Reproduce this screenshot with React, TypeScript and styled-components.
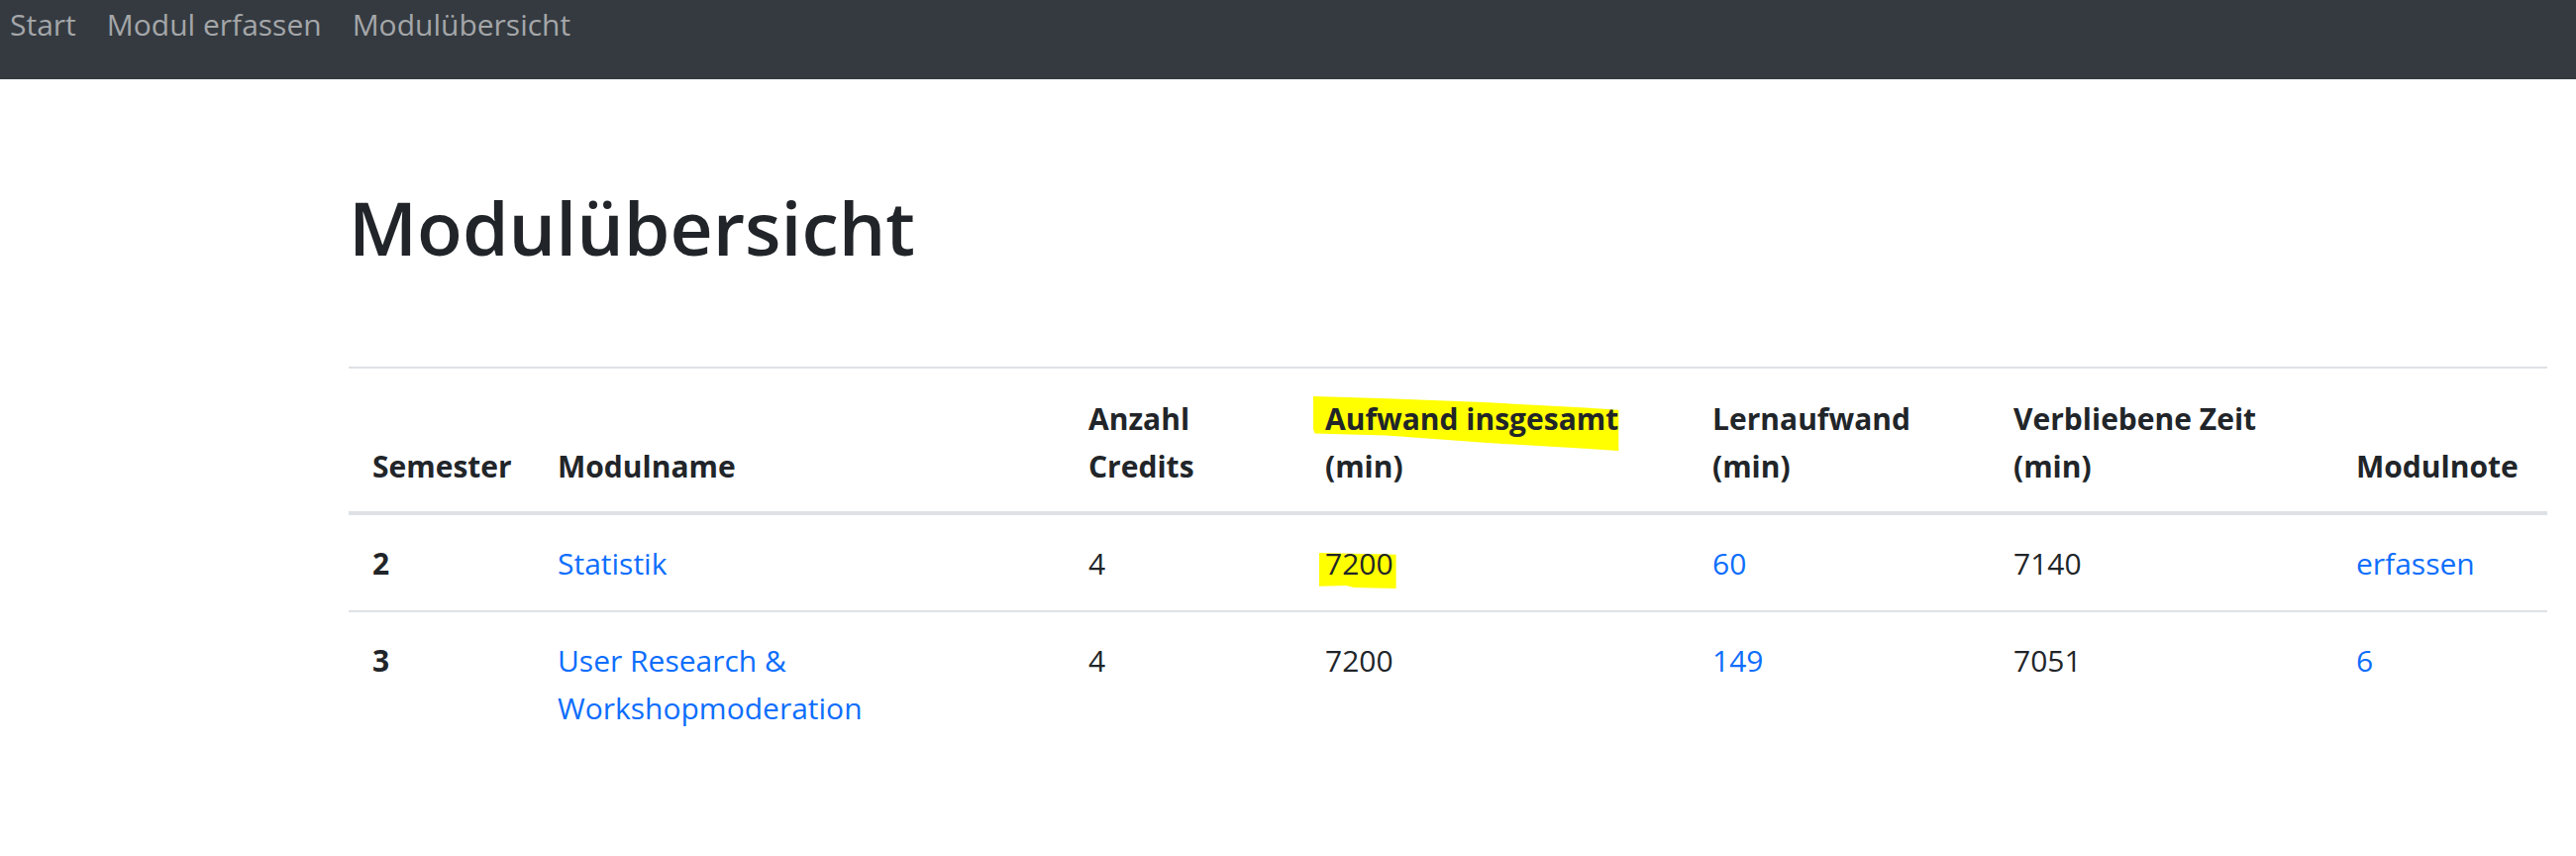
import React from "react";
import styled, { createGlobalStyle } from "styled-components";

const GlobalStyle = createGlobalStyle`
  html, body {
    margin: 0;
    padding: 0;
    background: #ffffff;
  }
  body {
    font-family: "Open Sans", "Noto Sans", "Liberation Sans", sans-serif;
    font-size: 30px;
    line-height: 48px;
    color: #212529;
  }
`;

const Navbar = styled.nav`
  height: 80px;
  background: #343a40;
  display: flex;
  align-items: flex-start;
  gap: 31px;
  padding-left: 10px;
`;

const NavLink = styled.a`
  color: #a4a6a9;
  font-size: 30px;
  line-height: 48px;
  padding-top: 1px;
  text-decoration: none;
`;

const Main = styled.main`
  margin-left: 352px;
  width: 2220px;
`;

const Title = styled.h1`
  margin: 101px 0 93px;
  font-size: 75px;
  line-height: 96px;
  font-weight: 600;
  color: #212529;
`;

const Table = styled.table`
  width: 2220px;
  table-layout: fixed;
  border-collapse: collapse;
`;

const Col = styled.col<{ $w: number }>`
  width: ${(p) => p.$w}px;
`;

const Th = styled.th`
  padding: 27px 24px 21px;
  text-align: left;
  vertical-align: bottom;
  font-weight: 700;
  line-height: 48px;
  border-top: 2px solid #dee2e6;
  border-bottom: 4px solid #dee2e6;
`;

const Td = styled.td<{ $strong?: boolean }>`
  padding: 25px 24px 23px;
  vertical-align: top;
  line-height: 48px;
  border-top: 2px solid #dee2e6;
  font-weight: ${(p) => (p.$strong ? 700 : 400)};
`;

const Link = styled.a`
  color: #0d6efd;
  text-decoration: none;
`;

const Marked = styled.span`
  position: relative;
  z-index: 0;
`;

const Marker = styled.svg<{ $l: number; $r: number; $t: number; $h: number }>`
  position: absolute;
  z-index: -1;
  left: ${(p) => p.$l}px;
  right: ${(p) => p.$r}px;
  top: ${(p) => p.$t}px;
  height: ${(p) => p.$h}px;
  width: calc(100% - ${(p) => p.$l + p.$r}px);
  overflow: visible;
`;

const HeaderMark: React.FC<{ children: React.ReactNode }> = ({ children }) => (
  <Marked>
    <Marker $l={-12} $r={0} $t={-2} $h={55} viewBox="0 0 100 100" preserveAspectRatio="none">
      <polygon
        fill="#ffff00"
        points="0,0 24,4 56,11 89,21 100,25 100,100 89,96 56,85 24,72 0.5,68 0,60"
      />
    </Marker>
    {children}
  </Marked>
);

const CellMark: React.FC<{ children: React.ReactNode }> = ({ children }) => (
  <Marked>
    <Marker $l={-6} $r={-3} $t={10} $h={36} viewBox="0 0 100 100" preserveAspectRatio="none">
      <polygon
        fill="#ffff00"
        points="0,0 100,5 100,100 45,97 35,92 0,94"
      />
    </Marker>
    {children}
  </Marked>
);

const cols = [187, 536, 239, 391, 304, 346, 217];

export default function App() {
  return (
    <>
      <GlobalStyle />
      <Navbar>
        <NavLink href="#">Start</NavLink>
        <NavLink href="#">Modul erfassen</NavLink>
        <NavLink href="#">Modulübersicht</NavLink>
      </Navbar>
      <Main>
        <Title>Modulübersicht</Title>
        <Table>
          <colgroup>
            {cols.map((w, i) => (
              <Col key={i} $w={w} />
            ))}
          </colgroup>
          <thead>
            <tr>
              <Th>Semester</Th>
              <Th>Modulname</Th>
              <Th>
                Anzahl
                <br />
                Credits
              </Th>
              <Th>
                <HeaderMark>Aufwand insgesamt</HeaderMark>
                <br />
                (min)
              </Th>
              <Th>
                Lernaufwand
                <br />
                (min)
              </Th>
              <Th>
                Verbliebene Zeit
                <br />
                (min)
              </Th>
              <Th>Modulnote</Th>
            </tr>
          </thead>
          <tbody>
            <tr>
              <Td $strong>2</Td>
              <Td>
                <Link href="#">Statistik</Link>
              </Td>
              <Td>4</Td>
              <Td>
                <CellMark>7200</CellMark>
              </Td>
              <Td>
                <Link href="#">60</Link>
              </Td>
              <Td>7140</Td>
              <Td>
                <Link href="#">erfassen</Link>
              </Td>
            </tr>
            <tr>
              <Td $strong>3</Td>
              <Td>
                <Link href="#">
                  User Research &amp;
                  <br />
                  Workshopmoderation
                </Link>
              </Td>
              <Td>4</Td>
              <Td>7200</Td>
              <Td>
                <Link href="#">149</Link>
              </Td>
              <Td>7051</Td>
              <Td>
                <Link href="#">6</Link>
              </Td>
            </tr>
          </tbody>
        </Table>
      </Main>
    </>
  );
}
